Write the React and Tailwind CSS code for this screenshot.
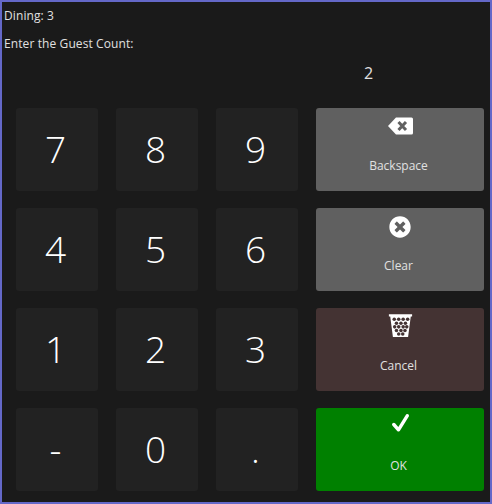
import React from 'react';
import { FaTimesCircle } from 'react-icons/fa';

const digits = ['7', '8', '9', '4', '5', '6', '1', '2', '3', '-', '0', '.'];

function BackspaceIcon() {
    return (
        <svg width="25" height="18" viewBox="0 0 25 18">
            <path d="M0 9L8 0.500H23.500Q25 0.500 25 2V16Q25 17.500 23.500 17.500H8Z" fill="#fff" />
            <path d="M10.500 5L18 13M18 5L10.500 13" stroke="#606060" strokeWidth="3" fill="none" />
        </svg>
    );
}

function BasketIcon() {
    const holes = [
        [7, 7], [12, 7], [17, 7], [22, 7],
        [9.5, 11.5], [14.5, 11.5], [19.5, 11.5],
        [7.5, 15.5], [12, 15.5], [17, 15.5], [21, 15.5],
        [9.5, 19.5], [14.5, 19.5], [19, 19.5],
        [12, 23.5], [16.5, 23.5],
    ];
    return (
        <svg width="25" height="25" viewBox="0 0 28 28">
            <path d="M1 1.500h26v2.500h-1.500L22.500 27h-17L2.500 4H1z" fill="#fff" />
            {holes.map(([x, y]) => (
                <circle key={`${x}-${y}`} cx={x} cy={y} r="2" fill="#443333" />
            ))}
        </svg>
    );
}

function CheckIcon() {
    return (
        <svg width="17" height="18" viewBox="0 0 17 18">
            <path d="M1.800 10.500L6.500 15.800L15.200 1.800" stroke="#fff" strokeWidth="3.400" strokeLinecap="round" strokeLinejoin="round" fill="none" />
        </svg>
    );
}

function ActionButton({ label, icon, className, iconClass }) {
    return (
        <button className={`relative rounded-[3px] text-xs text-[#e0e0e0] ${className}`}>
            <span className={`absolute left-0 right-0 flex justify-center text-white ${iconClass}`}>{icon}</span>
            <span className="absolute left-0 right-[3px] top-[50px] text-center leading-[16px]">{label}</span>
        </button>
    );
}

function App() {
    return (
        <div className="w-[492px] h-[504px] border-2 border-[#6468c8] bg-[#1a1a1a] text-[#e0e0e0] font-['Open_Sans','Noto_Sans',sans-serif] overflow-hidden">
            <div className="pl-[2px] pt-[6px] text-xs leading-[16px] tracking-[0.1px]">Dining: 3</div>
            <div className="pl-[2px] pt-[12px] text-xs leading-[16px] tracking-[0.1px]">Enter the Guest Count:</div>
            <div className="pt-[9px] h-[46px] w-[420px] pl-[313px] text-center text-base leading-[24px]">2</div>
            <div className="ml-[14px] mt-[10px] grid grid-cols-[82px_82px_82px_168px] grid-rows-[83px_83px_83px_83px] gap-x-[18px] gap-y-[17px]">
                {digits.map((d, i) => (
                    <React.Fragment key={d}>
                        <button className="rounded-[3px] bg-[#222222] pr-[3px] pb-[3px] text-[37px] font-[350] leading-none text-white">{d}</button>
                        {i === 2 && <ActionButton label="Backspace" className="bg-[#606060]" iconClass="top-[9px]" icon={<BackspaceIcon />} />}
                        {i === 5 && <ActionButton label="Clear" className="bg-[#606060]" iconClass="top-[8px] text-[22px]" icon={<FaTimesCircle />} />}
                        {i === 8 && <ActionButton label="Cancel" className="bg-[#443333]" iconClass="top-[5px]" icon={<BasketIcon />} />}
                        {i === 11 && <ActionButton label="OK" className="bg-[#008000]" iconClass="top-[6px]" icon={<CheckIcon />} />}
                    </React.Fragment>
                ))}
            </div>
        </div>
    );
}

export default App;
